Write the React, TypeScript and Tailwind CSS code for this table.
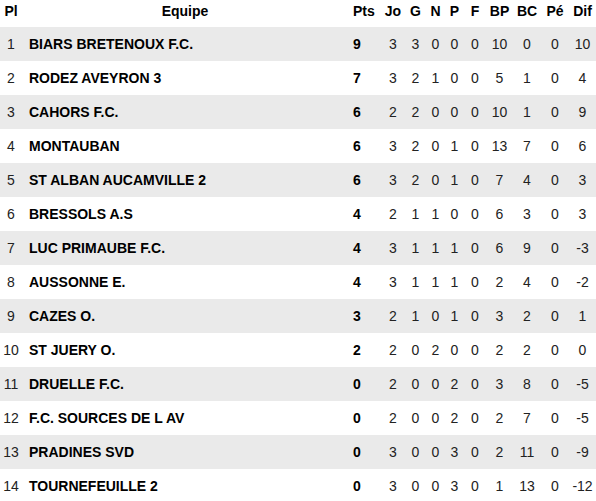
import React from 'react';

type Row = {
  pl: number;
  team: string;
  pts: number;
  stats: number[]; // Jo G N P F BP BC Pé Dif
};

const rows: Row[] = [
  { pl: 1, team: 'BIARS BRETENOUX F.C.', pts: 9, stats: [3, 3, 0, 0, 0, 10, 0, 0, 10] },
  { pl: 2, team: 'RODEZ AVEYRON 3', pts: 7, stats: [3, 2, 1, 0, 0, 5, 1, 0, 4] },
  { pl: 3, team: 'CAHORS F.C.', pts: 6, stats: [2, 2, 0, 0, 0, 10, 1, 0, 9] },
  { pl: 4, team: 'MONTAUBAN', pts: 6, stats: [3, 2, 0, 1, 0, 13, 7, 0, 6] },
  { pl: 5, team: 'ST ALBAN AUCAMVILLE 2', pts: 6, stats: [3, 2, 0, 1, 0, 7, 4, 0, 3] },
  { pl: 6, team: 'BRESSOLS A.S', pts: 4, stats: [2, 1, 1, 0, 0, 6, 3, 0, 3] },
  { pl: 7, team: 'LUC PRIMAUBE F.C.', pts: 4, stats: [3, 1, 1, 1, 0, 6, 9, 0, -3] },
  { pl: 8, team: 'AUSSONNE E.', pts: 4, stats: [3, 1, 1, 1, 0, 2, 4, 0, -2] },
  { pl: 9, team: 'CAZES O.', pts: 3, stats: [2, 1, 0, 1, 0, 3, 2, 0, 1] },
  { pl: 10, team: 'ST JUERY O.', pts: 2, stats: [2, 0, 2, 0, 0, 2, 2, 0, 0] },
  { pl: 11, team: 'DRUELLE F.C.', pts: 0, stats: [2, 0, 0, 2, 0, 3, 8, 0, -5] },
  { pl: 12, team: 'F.C. SOURCES DE L AV', pts: 0, stats: [2, 0, 0, 2, 0, 2, 7, 0, -5] },
  { pl: 13, team: 'PRADINES SVD', pts: 0, stats: [3, 0, 0, 3, 0, 2, 11, 0, -9] },
  { pl: 14, team: 'TOURNEFEUILLE 2', pts: 0, stats: [3, 0, 0, 3, 0, 1, 13, 0, -12] },
];

const statHeaders = ['Jo', 'G', 'N', 'P', 'F', 'BP', 'BC', 'Pé', 'Dif'];

// Pl | Equipe | Pts | Jo G N P F BP BC Pé Dif
const gridCols =
  'grid grid-cols-[22px_326px_33px_24px_21px_19px_19px_22px_27px_28px_28px_27px]';

const App: React.FC = () => {
  return (
    <div className="w-[596px] bg-white text-[14px] leading-[16px] text-black font-['Liberation_Sans',Arial,sans-serif]">
      {/* Header */}
      <div className={`${gridCols} h-[27px] pt-[3px] font-bold`}>
        <div className="text-center">Pl</div>
        <div className="text-center">Equipe</div>
        <div className="pl-[5px]">Pts</div>
        {statHeaders.map((h) => (
          <div key={h} className="text-center">
            {h}
          </div>
        ))}
      </div>

      {/* Rows */}
      {rows.map((row, i) => (
        <div
          key={row.pl}
          className={`${gridCols} h-[34px] items-center ${i % 2 === 0 ? 'bg-[#eaeaea]' : 'bg-white'}`}
        >
          <div className="text-center text-[#222]">{row.pl}</div>
          <div className="pl-[7px] font-bold whitespace-nowrap">{row.team}</div>
          <div className="pl-[5px] font-bold">{row.pts}</div>
          {row.stats.map((v, j) => (
            <div key={j} className="text-center text-[#222]">
              {v}
            </div>
          ))}
        </div>
      ))}
    </div>
  );
};

export default App;
